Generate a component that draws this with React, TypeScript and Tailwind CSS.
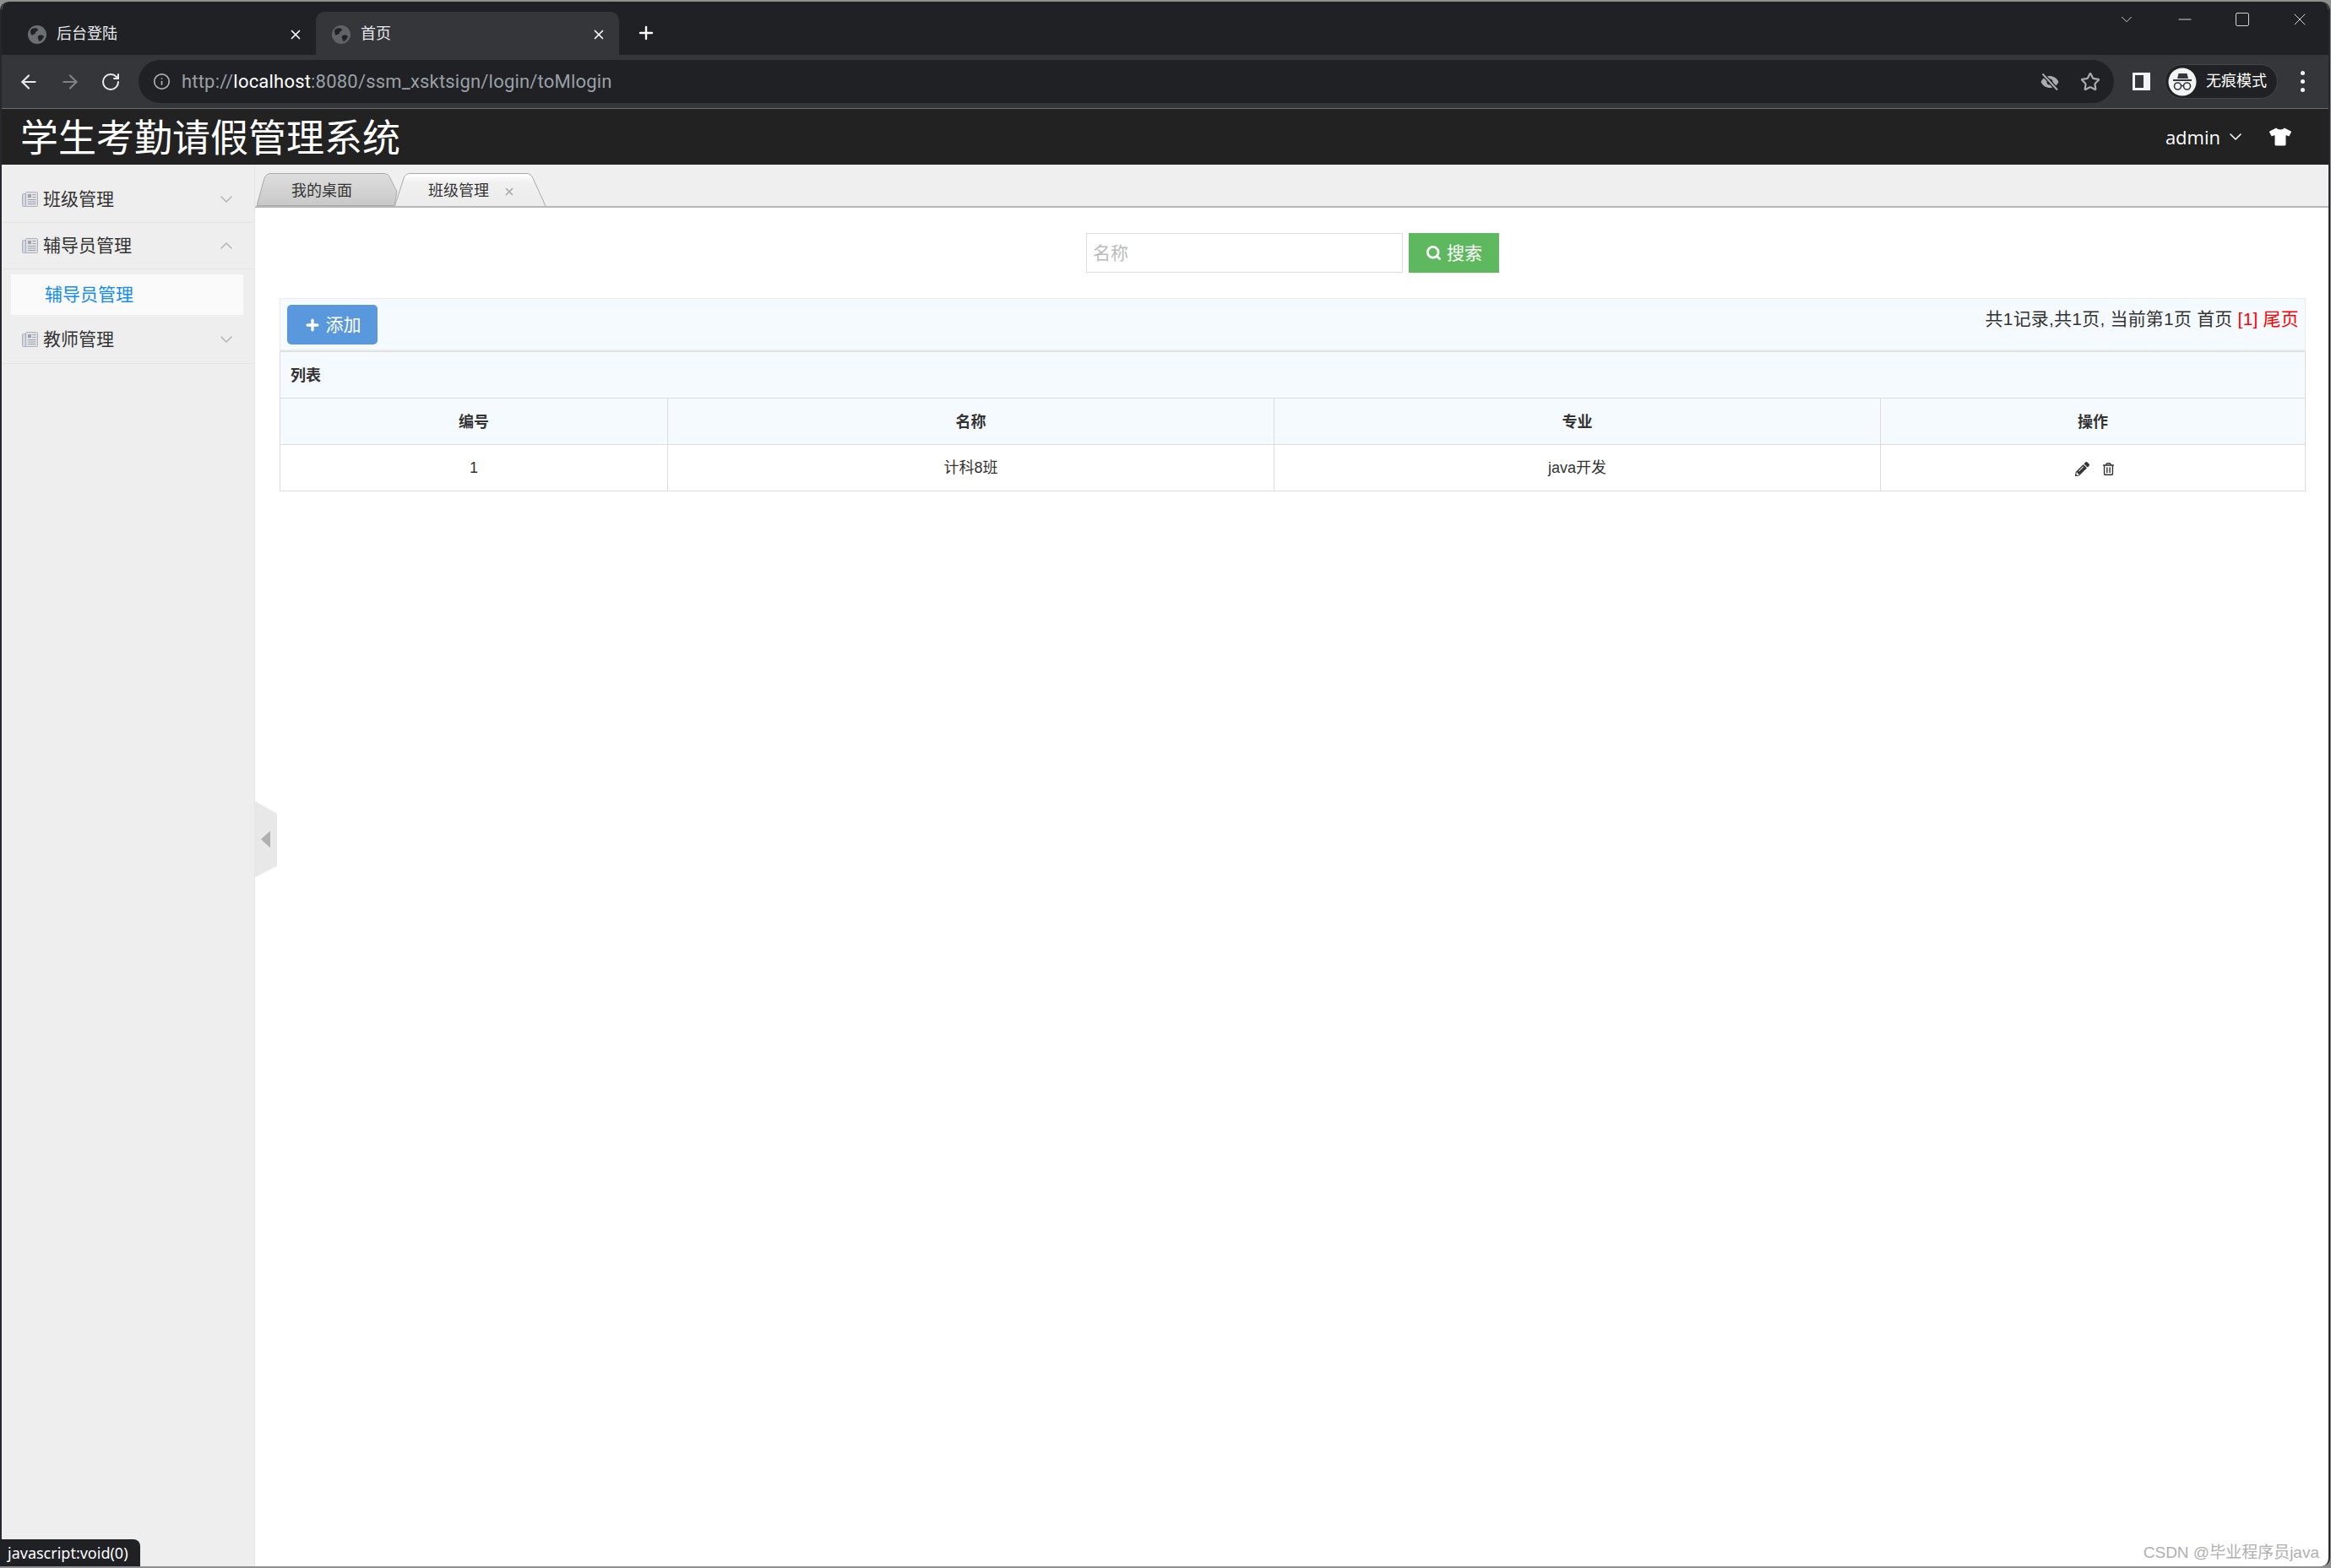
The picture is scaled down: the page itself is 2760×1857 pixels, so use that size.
import { ArrowLeft, ArrowRight, ChevronDown, ChevronUp, Info, Minus, Plus, RotateCw, Search, Square, Star, X } from 'lucide-react';
import { FaPencilAlt, FaRegTrashAlt, FaTshirt } from 'react-icons/fa';

const CJK = "font-['Liberation_Sans','Noto_Sans_CJK_SC',sans-serif]";

const Globe = ({ color }: { color: string }) => (
  <svg width="22" height="22" viewBox="0 0 22 22" className="shrink-0">
    <circle cx="11" cy="11" r="11" fill={color} />
    <path d="M5 4c3-1 6-1 7 1 0 2-3 2-3 4s-3 1-4 3C3 10 2 6 5 4zM13 12c3-1 5 0 6 1-1 3-3 5-5 6-2-1-1-3-2-4s0-2 1-3z" fill="#202124" />
  </svg>
);

const BrowserTab = ({ title, active }: { title: string; active?: boolean }) => (
  <div className={`flex h-[51px] w-[359px] items-center rounded-t-[10px] pt-[2px] ${active ? 'bg-[#35363a] pl-[19px]' : 'pl-[18px]'}`}>
    <Globe color={active ? '#5f6368' : '#6b6e72'} />
    <span className="ml-[12px] text-[18px] text-[#e8eaed]">{title}</span>
    <X className="ml-auto mr-[15px] text-white" size={18} strokeWidth={2.2} />
  </div>
);

const Incognito = () => (
  <svg width="34" height="34" viewBox="0 0 34 34" className="shrink-0">
    <circle cx="17" cy="17" r="16.5" fill="#f1f3f4" />
    <path d="M11 13l1.500-6h10l1.500 6z" fill="#35363a" />
    <rect x="6" y="14" width="22" height="2" fill="#35363a" />
    <circle cx="11.500" cy="22" r="4" fill="none" stroke="#35363a" strokeWidth="1.600" />
    <circle cx="22.500" cy="22" r="4" fill="none" stroke="#35363a" strokeWidth="1.600" />
    <path d="M15.500 21.500h3" stroke="#35363a" strokeWidth="1.600" />
  </svg>
);

const EyeSlash = () => (
  <svg width="24" height="24" viewBox="0 0 24 24" fill="none">
    <path d="M1.500 12C4 7 8 5 12 5s8 2 10.500 7C20 17 16 19 12 19S4 17 1.500 12z" fill="#a8abaf" />
    <circle cx="12" cy="12" r="3.500" fill="#202124" />
    <path d="M3.500 2.500l17.500 19" stroke="#202124" strokeWidth="4.500" />
    <path d="M3.500 2.500l17.500 19" stroke="#a8abaf" strokeWidth="2" />
  </svg>
);

const PanelIcon = () => (
  <svg width="19" height="18" viewBox="0 0 19 18" className="shrink-0">
    <rect x="0.500" y="2.500" width="6" height="15" rx="1" fill="#d3d6dc" stroke="#adb1ba" />
    <rect x="4.500" y="0.500" width="14" height="17" rx="1" fill="#dfe1e5" stroke="#adb1ba" />
    <rect x="7" y="3" width="4" height="4" fill="#9ea3ad" />
    <path d="M12.500 3.500h4M12.500 6.500h4M7 9.500h9.500M7 12h9.500M7 14.500h9.500" stroke="#9ea3ad" />
  </svg>
);

const MenuItem = ({ title, open, last }: { title: string; open?: boolean; last?: boolean }) => (
  <div className={`flex items-center pl-[24px] pr-[21px] text-[21px] text-[#333] ${last ? 'h-[58px] border-b border-[#e5e5e5]' : 'h-[55px] border-b border-[#e5e5e5]'}`}>
    <PanelIcon />
    <span className="ml-[6px]">{title}</span>
    {open ? (
      <ChevronUp className="ml-auto text-[#b4b4b4]" size={24} strokeWidth={1.500} />
    ) : (
      <ChevronDown className="ml-auto text-[#b4b4b4]" size={24} strokeWidth={1.500} />
    )}
  </div>
);

const PageTab = ({ title, active }: { title: string; active?: boolean }) => (
  <div className={`relative flex h-[39px] items-center pt-[4px] ${active ? '-ml-[4px] w-[180px] pl-[40px]' : 'w-[167px] pl-[41px]'}`}>
    {active ? (
      <svg className="absolute inset-0" width="180" height="39" viewBox="0 0 180 39">
        <defs>
          <linearGradient id="tabOn" x1="0" y1="0" x2="0" y2="1">
            <stop offset="0" stopColor="#ffffff" />
            <stop offset="0.3" stopColor="#f0f0f0" />
            <stop offset="1" stopColor="#ececec" />
          </linearGradient>
        </defs>
        <path d="M0 39L11 6Q13 0.500 19 0.500H156Q162 0.500 164 6L179 39Z" fill="url(#tabOn)" />
        <path d="M0.500 39L11 6Q13 0.500 19 0.500H156Q162 0.500 164 6L179 39" fill="none" stroke="#aaaaaa" />
      </svg>
    ) : (
      <svg className="absolute inset-0" width="167" height="39" viewBox="0 0 167 39">
        <defs>
          <linearGradient id="tabOff" x1="0" y1="0" x2="0" y2="1">
            <stop offset="0" stopColor="#dedede" />
            <stop offset="1" stopColor="#c8c8c8" />
          </linearGradient>
        </defs>
        <path d="M0 38.500L9 6Q11 0.500 17 0.500H150Q156 0.500 158 6L166 22L163 38.500Z" fill="url(#tabOff)" stroke="#aaaaaa" />
      </svg>
    )}
    <span className="relative text-[18px] text-[#333]">{title}</span>
    {active && <X className="relative ml-[17px] text-[#aaa]" size={14} strokeWidth={3} />}
  </div>
);

const App = () => {
  return (
    <div className={`relative h-[1857px] w-[2760px] overflow-hidden bg-[#8f8f8f] pb-[2px] pr-[1px] pt-[2px] ${CJK}`}>
      <div className="flex h-full flex-col overflow-hidden rounded-[10px] border-x-2 border-[#26282b] bg-white">
        {/* browser tabs */}
        <div className="flex h-[63px] shrink-0 items-end bg-[#202124] text-[#e8eaed]">
          <div className="ml-[13px] flex">
            <BrowserTab title="后台登陆" />
            <BrowserTab title="首页" active />
          </div>
          <Plus className="mb-[14px] ml-[20px] text-white" size={24} strokeWidth={2.400} />
          <div className="mb-[30px] ml-auto flex items-center gap-[46px] pr-[22px] text-[#d5d6d7]">
            <ChevronDown size={22} strokeWidth={1} />
            <Minus size={24} strokeWidth={1.200} />
            <Square size={20} strokeWidth={1.200} />
            <X size={24} strokeWidth={1} />
          </div>
        </div>

        {/* browser toolbar */}
        <div className="flex h-[64px] shrink-0 items-center border-b border-[#6a6b6e] bg-[#35363a]">
          <ArrowLeft className="ml-[19px] text-[#e8eaed]" size={26} strokeWidth={2} />
          <ArrowRight className="ml-[23px] text-[#7e8085]" size={26} strokeWidth={2} />
          <RotateCw className="ml-[23px] text-[#e8eaed]" size={24} strokeWidth={2} />
          <div className="ml-[21px] flex h-[51px] w-[2339px] items-center rounded-full bg-[#202124] pl-[17px]">
            <Info className="text-[#a8abaf]" size={21} strokeWidth={2} />
            <span className="ml-[13px] font-['Roboto',sans-serif] text-[22px] tracking-[0.2px] text-[#9aa0a6]">
              http://<span className="text-white">localhost</span>:8080/ssm_xsktsign/login/toMlogin
            </span>
            <div className="ml-auto flex items-center gap-[24px] pr-[16px]">
              <EyeSlash />
              <Star className="text-[#a8abaf]" size={24} strokeWidth={2.200} />
            </div>
          </div>
          <div className="ml-[22px] h-[21px] w-[21px] shrink-0 border-[3px] border-r-[8px] border-[#f1f3f4] bg-[#35363a]" />
          <div className="ml-[17px] flex h-[41px] w-[134px] items-center rounded-full border border-[#45464a] bg-[#202124] pl-[3px] text-[18px] text-white">
            <Incognito />
            <span className="ml-[11px] whitespace-nowrap">无痕模式</span>
          </div>
          <div className="ml-[27px] flex flex-col gap-[5px]">
            <span className="h-[5px] w-[5px] rounded-full bg-[#f1f3f4]" />
            <span className="h-[5px] w-[5px] rounded-full bg-[#f1f3f4]" />
            <span className="h-[5px] w-[5px] rounded-full bg-[#f1f3f4]" />
          </div>
        </div>

        {/* page header */}
        <div className="flex h-[66px] shrink-0 items-center bg-[#222222] pl-[22px] text-white">
          <h1 className="pt-[5px] text-[45px] font-normal leading-none">学生考勤请假管理系统</h1>
          <div className="ml-auto flex items-center pr-[44px]">
            <span className="font-['Open_Sans',sans-serif] text-[22px]">admin</span>
            <ChevronDown className="ml-[6px]" size={24} strokeWidth={1.600} />
            <FaTshirt className="ml-[28px]" size={26} />
          </div>
        </div>

        <div className="relative flex min-h-0 flex-1">
          {/* sidebar */}
          <aside className="w-[300px] shrink-0 border-r border-[#e5e5e5] bg-[#eeeeee] pt-[14px]">
            <MenuItem title="班级管理" />
            <MenuItem title="辅导员管理" open />
            <div className="pl-[11px] pr-[13px] pt-[6px]">
              <div className="flex h-[48px] items-center bg-[#fafafa] pl-[40px] text-[21px] text-[#148cf1]">辅导员管理</div>
            </div>
            <MenuItem title="教师管理" last />
          </aside>

          {/* main */}
          <main className="min-w-0 flex-1">
            <div className="flex h-[51px] items-end border-b-2 border-[#b8b8b8] bg-[#efeff0] pl-[2px]">
              <PageTab title="我的桌面" />
              <PageTab title="班级管理" active />
            </div>

            <div className="mt-[30px] flex justify-center gap-[7px] pl-[2px]">
              <input
                placeholder="名称"
                className="h-[47px] w-[375px] border border-[#ddd] bg-white px-[7px] text-[21px] placeholder:text-[#bbb]"
              />
              <button className="flex h-[47px] w-[107px] items-center justify-center gap-[6px] bg-[#5eb95e] text-[21px] text-white">
                <Search size={19} strokeWidth={3.500} />
                搜索
              </button>
            </div>

            <div className="ml-[29px] mr-[27px] mt-[30px]">
              <div className="flex h-[63px] items-start justify-between border border-b-2 border-[#e8eaec] bg-[#f5fafe] pl-[8px] pr-[7px] pt-[7px]">
                <button className="flex h-[47px] w-[107px] items-center justify-center gap-[6px] rounded-[5px] bg-[#5a98de] text-[21px] text-white">
                  <Plus size={20} strokeWidth={4} />
                  添加
                </button>
                <div className="pt-[1px] text-[21px] tracking-[0.2px] text-[#333]">
                  共1记录,共1页, 当前第1页 首页 <span className="text-[#ff0000]">[1] 尾页</span>
                </div>
              </div>
              <table className="w-full table-fixed border-collapse text-[18px] text-[#333]">
                <colgroup>
                  <col className="w-[459px]" />
                  <col className="w-[718px]" />
                  <col className="w-[718px]" />
                  <col />
                </colgroup>
                <thead>
                  <tr className="h-[55px] bg-[#f5fafe]">
                    <th colSpan={4} className="border border-[#ddd] px-[12px] pt-[2px] text-left font-bold">列表</th>
                  </tr>
                  <tr className="h-[55px] bg-[#f5fafe]">
                    <th className="border border-[#ddd] pt-[2px] font-bold">编号</th>
                    <th className="border border-[#ddd] pt-[2px] font-bold">名称</th>
                    <th className="border border-[#ddd] pt-[2px] font-bold">专业</th>
                    <th className="border border-[#ddd] pt-[2px] font-bold">操作</th>
                  </tr>
                </thead>
                <tbody>
                  <tr className="h-[55px] text-center">
                    <td className="border border-[#ddd] pt-[1px]">1</td>
                    <td className="border border-[#ddd] pt-[1px]">计科8班</td>
                    <td className="border border-[#ddd] pt-[1px]">java开发</td>
                    <td className="border border-[#ddd]">
                      <div className="flex items-center justify-center gap-[15px] pl-[4px] pt-[2px]">
                        <FaPencilAlt size={17} />
                        <FaRegTrashAlt size={15} />
                      </div>
                    </td>
                  </tr>
                </tbody>
              </table>
            </div>
          </main>

          {/* sidebar collapse handle */}
          <div className="absolute left-[300px] top-[754px] flex h-[90px] w-[26px] items-center bg-[#e8e8e8] pl-[7px] [clip-path:polygon(0_0,100%_16%,100%_85%,0_100%)]">
            <div className="h-0 w-0 border-y-[10px] border-r-[11px] border-y-transparent border-r-[#b0b0b0]" />
          </div>
        </div>
      </div>

      {/* status bubble */}
      <div className="absolute bottom-[2px] left-0 flex h-[32px] w-[166px] items-center rounded-tr-[8px] bg-[#202124] pl-[9px] font-['Noto_Sans',sans-serif] text-[18px] text-white">
        javascript:void(0)
      </div>

      {/* watermark */}
      <div className="absolute bottom-[4px] right-[14px] text-[19px] text-[#b0b0b0]">CSDN @毕业程序员java</div>
    </div>
  );
};

export default App;
